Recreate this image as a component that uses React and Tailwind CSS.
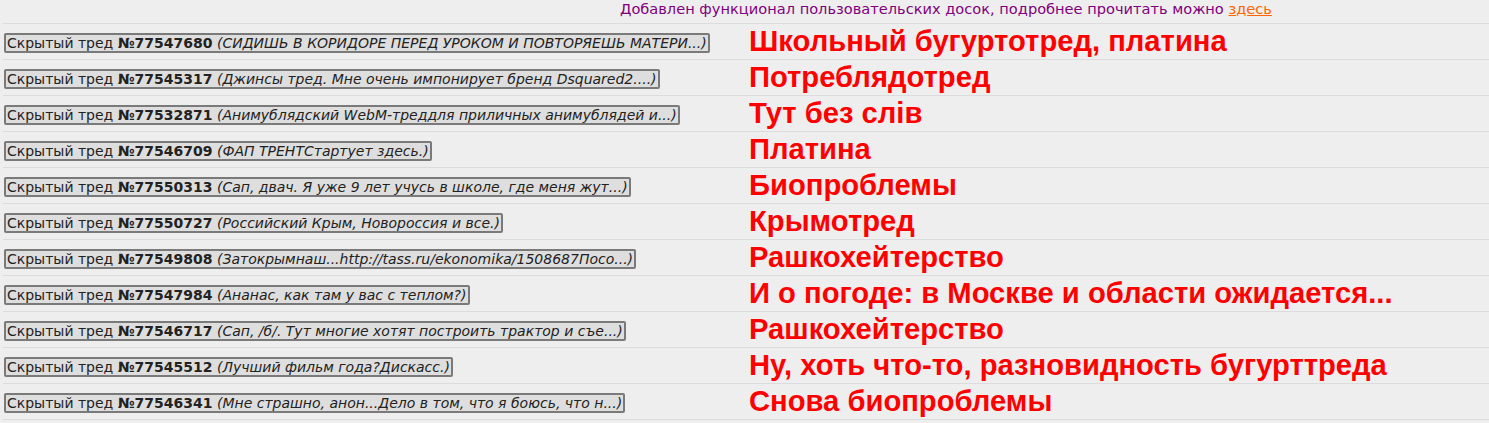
const threads = [
  { num: '77547680', text: 'СИДИШЬ В КОРИДОРЕ ПЕРЕД УРОКОМ И ПОВТОРЯЕШЬ МАТЕРИ...', note: 'Школьный бугуртотред, платина' },
  { num: '77545317', text: 'Джинсы тред. Мне очень импонирует бренд Dsquared2....', note: 'Потреблядотред' },
  { num: '77532871', text: 'Анимублядский WebM-треддля приличных анимублядей и...', note: 'Тут без слів' },
  { num: '77546709', text: 'ФАП ТРЕНТСтартует здесь.', note: 'Платина' },
  { num: '77550313', text: 'Сап, двач. Я уже 9 лет учусь в школе, где меня жут...', note: 'Биопроблемы' },
  { num: '77550727', text: 'Российский Крым, Новороссия и все.', note: 'Крымотред' },
  { num: '77549808', text: 'Затокрымнаш...http://tass.ru/ekonomika/1508687Посо...', note: 'Рашкохейтерство' },
  { num: '77547984', text: 'Ананас, как там у вас с теплом?', note: 'И о погоде: в Москве и области ожидается...' },
  { num: '77546717', text: 'Сап, /б/. Тут многие хотят построить трактор и съе...', note: 'Рашкохейтерство' },
  { num: '77545512', text: 'Лучший фильм года?Дискасс.', note: 'Ну, хоть что-то, разновидность бугурттреда' },
  { num: '77546341', text: 'Мне страшно, анон...Дело в том, что я боюсь, что н...', note: 'Снова биопроблемы' },
];

const HiddenThread = ({ num, text, note }) => (
  <div className="grid grid-cols-[746px_1fr] items-center h-[36px] border-t border-[#dcdcdc]">
    <div className="pl-px">
      <span className="inline-block h-[20px] leading-[16px] px-px border-2 border-[#7a7a7a] rounded-[2px] bg-[#dedede] text-[14px] text-[#222] font-['DejaVu_Sans',sans-serif] whitespace-nowrap">
        Скрытый тред <b className="font-bold">№{num}</b> <i>({text})</i>
      </span>
    </div>
    <div className="text-[29.2px] leading-[32px] font-bold text-[#f00] font-['Liberation_Sans',Arial,sans-serif] whitespace-nowrap -mt-[1px]">
      {note}
    </div>
  </div>
);

export default function App() {
  return (
    <div className="w-[1489px] h-[423px] bg-[#eeeeee] overflow-hidden">
      <div className="h-[23px] pl-[620px] pt-[1px] text-[14.6px] leading-[16px] text-[#800080] font-['DejaVu_Sans',sans-serif] whitespace-nowrap">
        Добавлен функционал пользовательских досок, подробнее прочитать можно{' '}
        <a href="#" className="text-[#ff6600] underline">здесь</a>
      </div>
      <div className="border-b border-[#dcdcdc] ml-[3px]">
        {threads.map((t) => (
          <HiddenThread key={t.num} {...t} />
        ))}
      </div>
    </div>
  );
}
